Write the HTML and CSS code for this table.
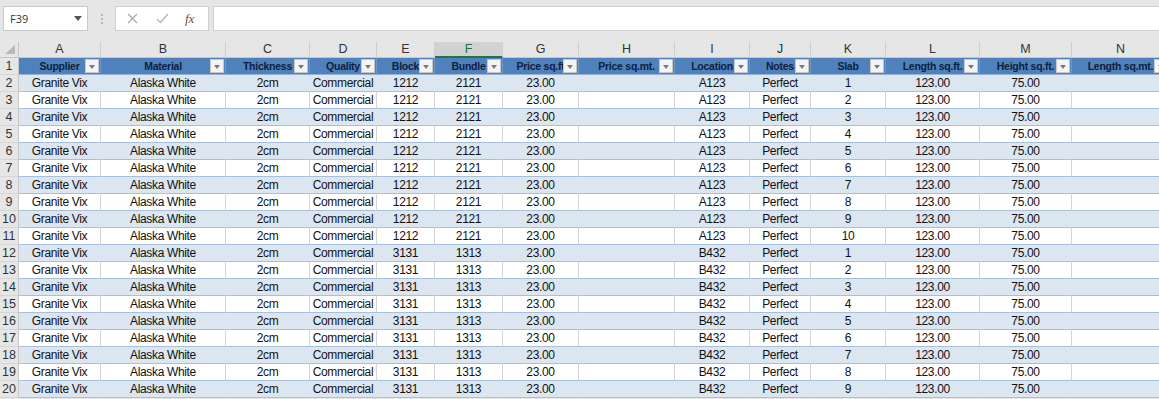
FILE: index.html
```html
<!DOCTYPE html>
<html>
<head>
<meta charset="utf-8">
<link rel="stylesheet" href="styles.css">
</head>
<body>
<div class="app">
  <div class="toolbar">
    <div class="namebox">
      <span class="namebox-text">F39</span>
      <svg class="namebox-caret" width="8" height="5" viewBox="0 0 8 5"><path d="M0 0H8L4 5Z" fill="#555"/></svg>
    </div>
    <div class="grip"><span></span><span></span><span></span></div>
    <div class="fxbox">
      <svg class="fx-icon" width="11" height="11" viewBox="0 0 11 11"><path d="M1 1L10 10M10 1L1 10" stroke="#a6a6a6" stroke-width="1.2" fill="none"/></svg>
      <svg class="fx-icon" width="13" height="11" viewBox="0 0 13 11"><path d="M1 6L4.5 9.5L12 1" stroke="#b5b5b5" stroke-width="1.3" fill="none"/></svg>
      <span class="fx-text">fx</span>
    </div>
    <div class="formula"></div>
  </div>
  <div class="sheet" id="sheet">
    <div class="row colhdr">
      <div class="corner"><svg width="10" height="9" viewBox="0 0 10 9"><path d="M10 0V9H0Z" fill="#b9b9b9"/></svg></div>
      <div class="ch">A</div><div class="ch">B</div><div class="ch">C</div><div class="ch">D</div><div class="ch">E</div>
      <div class="ch ch-active">F</div><div class="ch">G</div><div class="ch">H</div><div class="ch">I</div><div class="ch">J</div>
      <div class="ch">K</div><div class="ch">L</div><div class="ch">M</div><div class="ch">N</div>
    </div>
    <div class="row hdr">
      <div class="rh">1</div>
      <div class="hc">Supplier<i class="dd"></i></div>
      <div class="hc">Material<i class="dd"></i></div>
      <div class="hc">Thickness<i class="dd"></i></div>
      <div class="hc">Quality<i class="dd"></i></div>
      <div class="hc">Block<i class="dd"></i></div>
      <div class="hc">Bundle<i class="dd"></i></div>
      <div class="hc">Price sq.ft<i class="dd"></i></div>
      <div class="hc">Price sq.mt.<i class="dd"></i></div>
      <div class="hc">Location<i class="dd"></i></div>
      <div class="hc">Notes<i class="dd"></i></div>
      <div class="hc">Slab<i class="dd"></i></div>
      <div class="hc">Length sq.ft.<i class="dd"></i></div>
      <div class="hc">Height sq.ft.<i class="dd"></i></div>
      <div class="hc">Length sq.mt.<i class="dd"></i></div>
    </div>
  </div>
</div>
<script src="script.js"></script>
</body>
</html>
```

FILE: script.js
```js
(function () {
  var sheet = document.getElementById('sheet');
  for (var r = 2; r <= 20; r++) {
    var first = r <= 11;
    var slab = first ? r - 1 : r - 11;
    var vals = ['Granite Vix', 'Alaska White', '2cm', 'Commercial',
      first ? '1212' : '3131', first ? '2121' : '1313', '23.00', '',
      first ? 'A123' : 'B432', 'Perfect', String(slab), '123.00', '75.00', ''];
    var row = document.createElement('div');
    row.className = 'row data ' + (r % 2 === 0 ? 'band' : 'plain');
    var rh = document.createElement('div');
    rh.className = 'rh';
    rh.textContent = r;
    row.appendChild(rh);
    vals.forEach(function (v) {
      var c = document.createElement('div');
      c.className = 'dc';
      c.textContent = v;
      row.appendChild(c);
    });
    sheet.appendChild(row);
  }
})();
```

FILE: styles.css
```css
* { box-sizing: border-box; }
html, body { margin: 0; padding: 0; }
body {
  width: 1159px;
  height: 399px;
  overflow: hidden;
  background: #e6e6e6;
  font-family: "Liberation Sans", Arial, sans-serif;
}
.app { width: 1159px; }

.toolbar {
  height: 42px;
  display: flex;
  align-items: flex-start;
  padding: 6px 0 0 3px;
  background: #e6e6e6;
}
.namebox {
  width: 85px;
  height: 25px;
  background: #fff;
  border: 1px solid #c9c9c9;
  display: flex;
  align-items: center;
  justify-content: space-between;
  padding: 0 5px 0 6px;
}
.namebox-text {
  font-family: "Open Sans", "Noto Sans", sans-serif;
  font-size: 11px;
  color: #333;
}
.grip {
  width: 27px;
  height: 25px;
  display: flex;
  flex-direction: column;
  align-items: center;
  justify-content: center;
  gap: 2px;
}
.grip span { width: 2px; height: 2px; background: #b5b5b5; }
.fxbox {
  width: 94px;
  height: 25px;
  background: #fff;
  border: 1px solid #cfcfcf;
  display: flex;
  align-items: center;
  padding-left: 11px;
  gap: 18px;
}
.fx-text {
  font-family: "Liberation Serif", serif;
  font-style: italic;
  font-size: 13px;
  color: #555;
  margin-left: -2px;
}
.formula {
  flex: 1;
  height: 25px;
  margin-left: 4px;
  background: #fff;
  border: 1px solid #cfcfcf;
  border-right: none;
}

.sheet { width: 1170px; }
.row {
  display: grid;
  grid-template-columns: 19px 82px 125px 84px 67px 58px 68px 76px 96px 75px 61px 75px 94px 92px 98px;
}
.colhdr { height: 16px; }
.corner {
  background: #e6e6e6;
  border-right: 1px solid #c6c6c6;
  border-bottom: 1px solid #c6c6c6;
  display: flex;
  align-items: flex-end;
  justify-content: flex-end;
  padding: 0 3px 3px 0;
}
.ch {
  background: #e6e6e6;
  border-right: 1px solid #cfcfcf;
  border-bottom: 1px solid #c6c6c6;
  font-size: 12.5px;
  line-height: 15px;
  text-align: center;
  color: #333;
}
.ch-active {
  background: #d2d2d2;
  color: #217346;
  border-bottom: 2px solid #217346;
  line-height: 14px;
}

.rh {
  background: #e6e6e6;
  border-right: 1px solid #c6c6c6;
  border-bottom: 1px solid #d6d6d6;
  font-size: 12.5px;
  line-height: 16px;
  text-align: center;
  color: #333;
}
.hdr { height: 17px; }
.hc {
  position: relative;
  background: #4f81bd;
  border-right: 1px solid #6f97c8;
  border-bottom: 1px solid #95b3d7;
  font-size: 10.5px;
  letter-spacing: -0.25px;
  font-weight: bold;
  line-height: 16px;
  text-align: center;
  color: #0f1e3c;
  white-space: nowrap;
  overflow: hidden;
}
.dd {
  position: absolute;
  top: 1px;
  right: 1px;
  width: 14px;
  height: 14px;
  background: #f4f4f4;
  border: 1px solid #c8c8c8;
}
.dd::after {
  content: "";
  position: absolute;
  left: 3px;
  top: 5px;
  border-left: 3.5px solid transparent;
  border-right: 3.5px solid transparent;
  border-top: 4px solid #7a7a7a;
}

.data { height: 17px; }
.dc {
  border-right: 1px solid #d4d4d4;
  border-bottom: 1px solid #a7c0e0;
  font-size: 12px;
  letter-spacing: -0.35px;
  line-height: 16px;
  text-align: center;
  color: #111;
  white-space: nowrap;
  overflow: hidden;
}
.band .dc { background: #dce6f1; border-right-color: #dce6f1; }
.plain .dc { background: #fff; }
```
